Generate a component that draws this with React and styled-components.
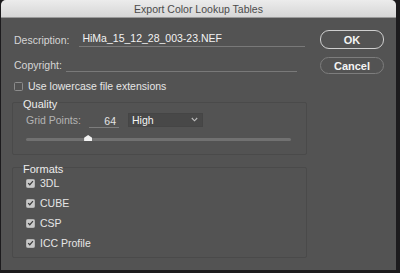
import styled, { createGlobalStyle } from 'styled-components'

const GlobalStyle = createGlobalStyle`
  html, body {
    margin: 0;
    padding: 0;
    background: #1c1b1d;
  }
  body {
    font-family: "Liberation Sans", Arial, sans-serif;
    font-size: 10.5px;
  }
`

const formats = ['3DL', 'CUBE', 'CSP', 'ICC Profile']

const Check = ({ checked }) => (
  <Box $checked={checked}>
    {checked && (
      <svg width="8" height="8" viewBox="0 0 8 8">
        <path d="M1.3 4.1 L3.2 6 L6.8 1.8" fill="none" stroke="#3c3c3c" strokeWidth="1.4" />
      </svg>
    )}
  </Box>
)

const App = () => {
  // slider position for 64 grid points
  const thumbPos = (64 - 4) / 256

  return (
    <>
      <GlobalStyle />
      <Window>
        <TitleBar>Export Color Lookup Tables</TitleBar>
        <Body>
          <Main>
            <FieldRow $top={14}>
              <Label>Description:</Label>
              <Input $width={228} $gap={10}>HiMa_15_12_28_003-23.NEF</Input>
            </FieldRow>
            <FieldRow $top={10}>
              <Label>Copyright:</Label>
              <Input $width={228} $gap={4} />
            </FieldRow>
            <CheckRow $top={9} $left={2}>
              <Check />
              <span>Use lowercase file extensions</span>
            </CheckRow>

            <Group $top={11} $height={53}>
              <Legend>Quality</Legend>
              <GridRow>
                <SubLabel>Grid Points:</SubLabel>
                <NumberInput>64</NumberInput>
                <Select>
                  <span>High</span>
                  <svg width="7" height="5" viewBox="0 0 7 5">
                    <path d="M0.8 1 L3.5 3.8 L6.2 1" fill="none" stroke="#bdbdbd" strokeWidth="1.1" />
                  </svg>
                </Select>
              </GridRow>
              <Track>
                <Thumb style={{ left: `${thumbPos * 100}%` }} />
              </Track>
            </Group>

            <Group $top={12} $height={91}>
              <Legend>Formats</Legend>
              <FormatList>
                {formats.map(name => (
                  <CheckRow key={name}>
                    <Check checked />
                    <span>{name}</span>
                  </CheckRow>
                ))}
              </FormatList>
            </Group>
          </Main>
          <Buttons>
            <Button $primary>OK</Button>
            <Button>Cancel</Button>
          </Buttons>
        </Body>
      </Window>
    </>
  )
}

export default App

const Window = styled.div`
  margin-left: 1px;
  width: 395px;
  height: 270px;
  background: #535353;
  border-radius: 5px 5px 0 0;
  overflow: hidden;
  display: flex;
  flex-direction: column;
`

const TitleBar = styled.div`
  height: 17px;
  flex: none;
  background: linear-gradient(#ececec, #d6d6d6);
  border-bottom: 1px solid #9a9a9a;
  color: #4b4b4b;
  font-size: 10.5px;
  line-height: 18px;
  text-align: center;
`

const Body = styled.div`
  display: flex;
  flex-direction: row;
  padding: 0 0 0 11px;
`

const Main = styled.div`
  width: 295px;
  display: flex;
  flex-direction: column;
`

const FieldRow = styled.div`
  display: flex;
  align-items: flex-end;
  margin-top: ${p => p.$top}px;
  padding-left: 2px;
  height: 15px;
`

const Label = styled.span`
  color: #d6d6d6;
  line-height: 13px;
`

const Input = styled.div`
  flex: 1;
  max-width: ${p => p.$width}px;
  margin-left: ${p => p.$gap}px;
  margin-right: ${p => 12 - p.$gap}px;
  height: 14px;
  padding-left: 3px;
  border-bottom: 1px solid #797979;
  color: #f2f2f2;
  line-height: 12px;
`

const CheckRow = styled.div`
  display: flex;
  align-items: center;
  gap: 5px;
  margin-top: ${p => p.$top || 0}px;
  margin-left: ${p => p.$left || 0}px;
  height: 10px;
  color: #e6e6e6;
`

const Box = styled.span`
  width: 9px;
  height: 9px;
  flex: none;
  box-sizing: border-box;
  border-radius: 1.5px;
  display: flex;
  align-items: center;
  justify-content: center;
  background: ${p => (p.$checked ? '#c9c9c9' : '#525252')};
  border: 1px solid ${p => (p.$checked ? '#b5b5b5' : '#8c8c8c')};
`

const Group = styled.div`
  position: relative;
  margin-top: ${p => p.$top}px;
  height: ${p => p.$height}px;
  box-sizing: border-box;
  border: 1px solid #4a4a4a;
  border-radius: 2px;
  padding: 9px 13px 0 13px;
`

const Legend = styled.span`
  position: absolute;
  top: -4px;
  left: 10px;
  color: #ececec;
  font-size: 11px;
  line-height: 11px;
`

const GridRow = styled.div`
  display: flex;
  align-items: center;
  height: 15px;
`

const SubLabel = styled.span`
  color: #b4b4b4;
  width: 63px;
`

const NumberInput = styled.div`
  width: 30px;
  height: 14px;
  box-sizing: border-box;
  border-bottom: 1px solid #7c7c7c;
  color: #e4e4e4;
  text-align: right;
  padding-right: 3px;
  line-height: 14px;
  margin-top: 3px;
`

const Select = styled.div`
  margin-left: 9px;
  width: 75px;
  height: 14px;
  box-sizing: border-box;
  background: #484848;
  border: 1px solid #454545;
  display: flex;
  align-items: center;
  justify-content: space-between;
  padding: 0 4px 0 3px;
  color: #f4f4f4;
`

const Track = styled.div`
  position: relative;
  margin-top: 11px;
  width: 265px;
  height: 3px;
  border-radius: 2px;
  background: #717171;
`

const Thumb = styled.span`
  position: absolute;
  top: -3px;
  width: 8px;
  height: 6px;
  margin-left: -4px;
  background: #f2f2f2;
  clip-path: polygon(50% 0, 100% 45%, 100% 100%, 0 100%, 0 45%);
`

const FormatList = styled.div`
  display: flex;
  flex-direction: column;
  gap: 10px;
  margin-top: 1px;
`

const Buttons = styled.div`
  display: flex;
  flex-direction: column;
  gap: 8px;
  margin-left: 13px;
  padding-top: 12px;
`

const Button = styled.div`
  width: 64px;
  height: ${p => (p.$primary ? 19 : 17)}px;
  box-sizing: border-box;
  border-radius: 9px;
  border: ${p => (p.$primary ? '1.5px solid #cfcfcf' : '1px solid #7d7d7d')};
  color: #f4f4f4;
  font-size: 11px;
  font-weight: 700;
  display: flex;
  align-items: center;
  justify-content: center;
`
